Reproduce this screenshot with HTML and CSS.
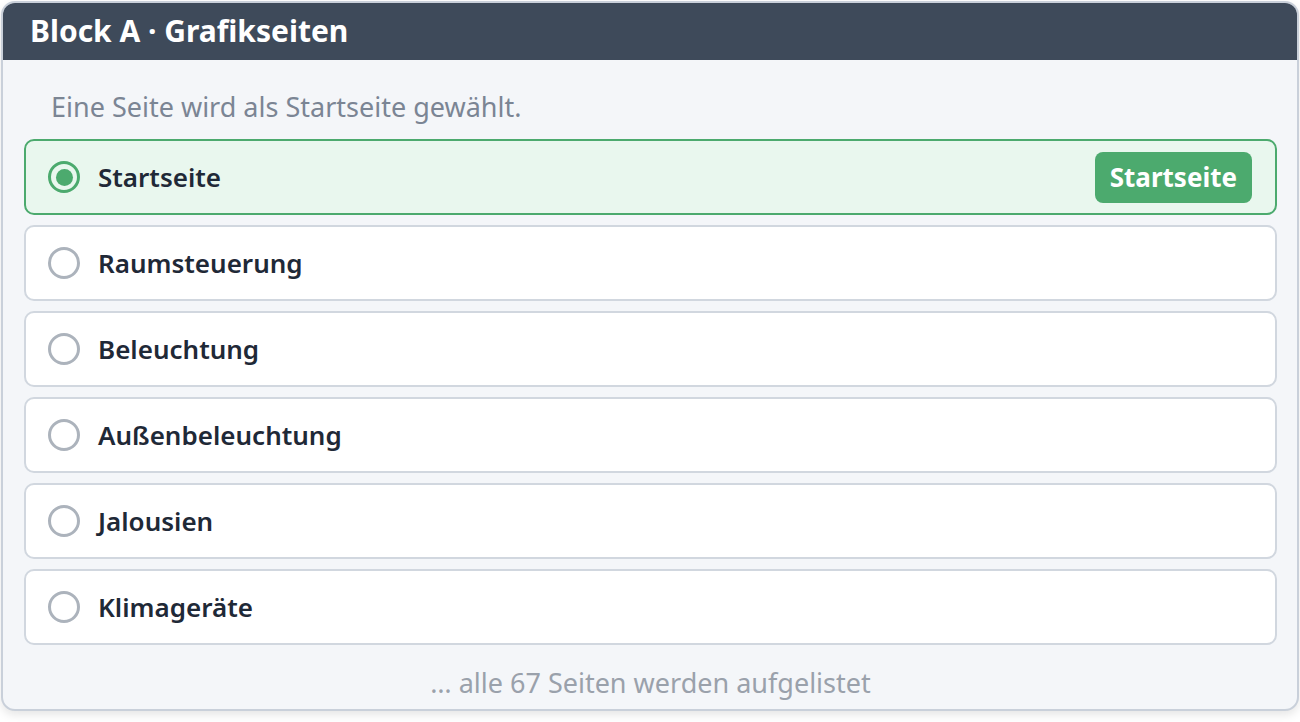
FILE: index.html
```html
<!DOCTYPE html>
<html lang="de">
<head>
<meta charset="utf-8">
<title>Block A · Grafikseiten</title>
<link rel="stylesheet" href="styles.css">
</head>
<body>
<div class="card">
  <div class="card-header">Block A · Grafikseiten</div>
  <div class="card-body">
    <p class="hint">Eine Seite wird als Startseite gewählt.</p>
    <ul class="list">
      <li class="row selected"><span class="radio"></span><span class="label">Startseite</span><span class="badge">Startseite</span></li>
      <li class="row"><span class="radio"></span><span class="label">Raumsteuerung</span></li>
      <li class="row"><span class="radio"></span><span class="label">Beleuchtung</span></li>
      <li class="row"><span class="radio"></span><span class="label">Außenbeleuchtung</span></li>
      <li class="row"><span class="radio"></span><span class="label">Jalousien</span></li>
      <li class="row"><span class="radio"></span><span class="label">Klimageräte</span></li>
    </ul>
    <p class="more">… alle 67 Seiten werden aufgelistet</p>
  </div>
</div>
</body>
</html>
```
FILE: styles.css
```css
* { box-sizing: border-box; }
html, body { margin: 0; padding: 0; background: #ffffff; }
body {
  font-family: "Noto Sans", "Open Sans", "Liberation Sans", sans-serif;
  width: 1300px;
  height: 722px;
  overflow: hidden;
  padding: 1px 1px 0 1px;
}
.card {
  width: 1298px;
  height: 710px;
  border: 2px solid #c9d0da;
  border-radius: 14px;
  overflow: hidden;
  background: #f4f6f9;
  box-shadow: 0 4px 10px rgba(0, 0, 0, 0.10);
  display: flex;
  flex-direction: column;
}
.card-header {
  background: #3e4a5a;
  color: #ffffff;
  font-weight: 700;
  font-size: 30px;
  height: 57px;
  line-height: 56px;
  padding-left: 27px;
  flex: none;
}
.card-body {
  padding: 31px 20px 0 21px;
  display: flex;
  flex-direction: column;
}
.hint {
  margin: 0 0 16px 27px;
  font-size: 27px;
  line-height: 32px;
  color: #7b8594;
}
.list {
  list-style: none;
  margin: 0;
  padding: 0;
  display: flex;
  flex-direction: column;
  gap: 10px;
}
.row {
  height: 76px;
  border: 2px solid #d1d7df;
  border-radius: 10px;
  background: #ffffff;
  display: flex;
  align-items: center;
  padding: 0 23px 0 22px;
}
.row.selected {
  border-color: #4caa6e;
  background: #e9f7ee;
}
.radio {
  width: 32px;
  height: 32px;
  border: 3px solid #acb3bc;
  border-radius: 50%;
  flex: none;
  display: flex;
  align-items: center;
  justify-content: center;
  margin-right: 18px;
}
.row.selected .radio {
  border-color: #4caa6e;
}
.row.selected .radio::after {
  content: "";
  width: 17px;
  height: 17px;
  border-radius: 50%;
  background: #4caa6e;
}
.label {
  font-size: 26px;
  font-weight: 600;
  color: #1f2937;
  flex: 1;
}
.badge {
  background: #4caa6e;
  color: #ffffff;
  font-weight: 700;
  font-size: 26px;
  height: 51px;
  line-height: 51px;
  padding: 0 15px;
  border-radius: 8px;
}
.more {
  margin: 22px 0 0 0;
  text-align: center;
  font-size: 27px;
  line-height: 32px;
  color: #9aa1ab;
}
```
